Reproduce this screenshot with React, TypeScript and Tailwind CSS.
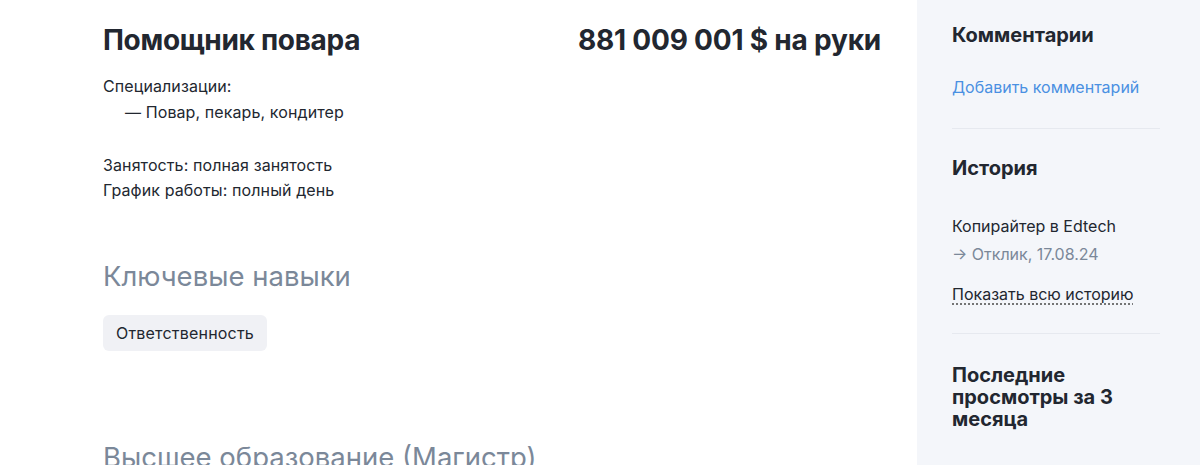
export default function App() {
  return (
    <div
      className="flex w-[1200px] h-[465px] overflow-hidden bg-white text-[#222730]"
      style={{ fontFamily: 'Inter, "Noto Sans", sans-serif' }}
    >
      <main className="w-[917px] shrink-0 pl-[103px] pr-[36px] pt-[22px]">
        <div className="flex items-start justify-between">
          <h1 className="text-[28px] leading-[36px] font-bold tracking-[-0.3px]">Помощник повара</h1>
          <div className="text-[28px] leading-[36px] font-bold tracking-[-0.2px]">881 009 001 $ на руки</div>
        </div>
        <div className="mt-[15px] text-[16px] leading-[26px] tracking-[0.1px]">
          <div>Специализации:</div>
          <div className="pl-[22px]">— Повар, пекарь, кондитер</div>
        </div>
        <div className="mt-[28px] text-[16px] leading-[25px] tracking-[0.1px]">
          <div>Занятость: полная занятость</div>
          <div>График работы: полный день</div>
        </div>
        <h2 className="mt-[55px] text-[27.5px] leading-[36px] text-[#7b8899]">Ключевые навыки</h2>
        <div className="mt-[21px] flex">
          <span className="h-[36px] px-[13px] flex items-center rounded-[6px] bg-[#f0f1f5] text-[16px] tracking-[0.2px]">Ответственность</span>
        </div>
        <h2 className="mt-[88px] text-[27.5px] leading-[36px] text-[#7b8899]">Высшее образование (Магистр)</h2>
      </main>
      <aside className="flex-1 bg-[#f4f6fa] pl-[35px] pr-[40px] pt-[21px]">
        <h3 className="text-[20px] leading-[28px] font-bold">Комментарии</h3>
        <div className="mt-[26px] text-[16px] leading-[24px] text-[#4a90e2]">Добавить комментарий</div>
        <div className="mt-[29px] h-px bg-[#e6e9ef]" />
        <h3 className="mt-[25px] text-[20px] leading-[28px] font-bold">История</h3>
        <div className="mt-[32px] text-[16px] leading-[24px]">Копирайтер в Edtech</div>
        <div className="mt-[4px] text-[16px] leading-[24px] text-[#7b8899]">→ Отклик, 17.08.24</div>
        <div className="mt-[16px] text-[16px] leading-[24px]">
          <span className="underline decoration-dotted decoration-[#555] underline-offset-[4px]">Показать всю историю</span>
        </div>
        <div className="mt-[27px] h-px bg-[#e6e9ef]" />
        <h3 className="mt-[30px] text-[20px] leading-[22px] font-bold">Последние просмотры за 3 месяца</h3>
      </aside>
    </div>
  );
}
